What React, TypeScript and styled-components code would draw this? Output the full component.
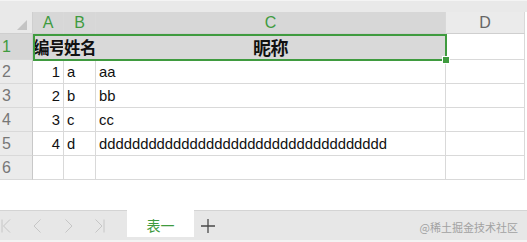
import React from "react";
import styled, { createGlobalStyle } from "styled-components";

const GREEN = "#3f9b3f";
const GRID = "#d9d9d9";

const GlobalStyle = createGlobalStyle`
  html, body {
    margin: 0;
    padding: 0;
    background: #ffffff;
  }
  * {
    box-sizing: border-box;
  }
`;

const Page = styled.div`
  width: 527px;
  height: 242px;
  display: flex;
  flex-direction: column;
  overflow: hidden;
  font-family: "Liberation Sans", "Noto Sans CJK SC", sans-serif;
`;

const TopStrip = styled.div`
  height: 12px;
  background: #e9e9e9;
  border-top: 1px solid #f4f4f4;
`;

const SheetWrap = styled.div`
  position: relative;
  width: 525px;
`;

const Sheet = styled.div`
  display: grid;
  grid-template-columns: 33px 31px 32px 350px 79px;
  grid-template-rows: 22px 26px repeat(5, 24px);
`;

const Corner = styled.div`
  position: relative;
  background: #e9e9e9;
  border-right: 1px solid #cfcfcf;
  border-bottom: 1px solid #cfcfcf;

  &::after {
    content: "";
    position: absolute;
    right: 5px;
    bottom: 3px;
    border-left: 10px solid transparent;
    border-bottom: 10px solid #c4c4c4;
  }
`;

const ColHead = styled.div<{ $selected?: boolean }>`
  display: flex;
  align-items: center;
  justify-content: center;
  background: ${(p) => (p.$selected ? "#d7d7d7" : "#ebebeb")};
  color: ${(p) => (p.$selected ? GREEN : "#666666")};
  border-right: 1px solid ${GRID};
  border-bottom: 1px solid #cfcfcf;
  font-family: "Liberation Sans", sans-serif;
  font-size: 16px;
  padding-top: 1px;
`;

const RowHead = styled.div<{ $selected?: boolean }>`
  display: flex;
  align-items: center;
  padding-left: 2px;
  background: ${(p) => (p.$selected ? "#d7d7d7" : "#ebebeb")};
  color: ${(p) => (p.$selected ? GREEN : "#777777")};
  border-right: 1px solid #c8c8c8;
  border-bottom: 1px solid ${GRID};
  font-size: 16px;
`;

const Cell = styled.div<{
  $align?: "left" | "right" | "center";
  $selected?: boolean;
  $head?: boolean;
  $size?: number;
}>`
  display: flex;
  align-items: center;
  justify-content: ${(p) =>
    p.$align === "right" ? "flex-end" : p.$align === "center" ? "center" : "flex-start"};
  padding: 0 ${(p) => (p.$head ? "0" : "3px")};
  background: ${(p) => (p.$selected ? "#d9d9d9" : "#ffffff")};
  border-right: 1px solid ${(p) => (p.$selected ? "#d9d9d9" : GRID)};
  border-bottom: 1px solid ${GRID};
  color: #111111;
  font-family: ${(p) =>
    p.$head
      ? `"Noto Sans CJK SC", sans-serif`
      : `"Liberation Sans", "Noto Sans CJK SC", sans-serif`};
  font-weight: ${(p) => (p.$head ? 700 : 400)};
  font-size: ${(p) => p.$size ?? 14.8}px;
  white-space: nowrap;
  overflow: ${(p) => (p.$head ? "hidden" : "visible")};
  letter-spacing: ${(p) => (p.$head ? "-0.5px" : "0")};
`;

const Selection = styled.div`
  position: absolute;
  left: 33px;
  top: 22px;
  width: 414px;
  height: 27px;
  border: 2px solid ${GREEN};
  pointer-events: none;
`;

const Handle = styled.div`
  position: absolute;
  right: -4px;
  bottom: -4px;
  width: 6px;
  height: 6px;
  background: ${GREEN};
  border: 1px solid #ffffff;
  box-sizing: content-box;
  margin: -1px;
`;

const Blank = styled.div`
  height: 30px;
  background: #ffffff;
`;

const TabBar = styled.div`
  height: 30px;
  display: flex;
  align-items: stretch;
  background: #e7e7e7;
  border-top: 1px solid #d4d4d4;
`;

const Nav = styled.div`
  width: 127px;
  display: flex;
  align-items: center;
  gap: 20px;
  padding-left: 1px;
`;

const NavIcon = styled.svg`
  width: 11px;
  height: 16px;
  stroke: #c6c6c6;
  stroke-width: 1;
  fill: none;
`;

const SheetTab = styled.div`
  width: 67px;
  display: flex;
  align-items: center;
  justify-content: center;
  background: #ffffff;
  margin-bottom: 3px;
  margin-top: -1px;
  color: ${GREEN};
  font-family: "Noto Sans CJK SC", sans-serif;
  font-size: 14px;
  padding-top: 2px;
`;

const AddTab = styled.div`
  width: 28px;
  display: flex;
  align-items: center;
  justify-content: center;
`;

const Spacer = styled.div`
  flex: 1;
`;

const Watermark = styled.div`
  display: flex;
  align-items: center;
  padding-right: 9px;
  padding-top: 3px;
  color: #a2a2a2;
  font-family: "Noto Sans CJK SC", sans-serif;
  font-size: 11px;
`;

const BottomStrip = styled.div`
  height: 2px;
  background: #f3f3f3;
`;

const rows = [
  { n: 2, id: "1", name: "a", nick: "aa" },
  { n: 3, id: "2", name: "b", nick: "bb" },
  { n: 4, id: "3", name: "c", nick: "cc" },
  { n: 5, id: "4", name: "d", nick: "d".repeat(35) },
];

const App = () => {
  return (
    <>
      <GlobalStyle />
      <Page>
        <TopStrip />
        <SheetWrap>
          <Sheet>
            <Corner />
            <ColHead $selected>A</ColHead>
            <ColHead $selected>B</ColHead>
            <ColHead $selected>C</ColHead>
            <ColHead>D</ColHead>

            <RowHead $selected>1</RowHead>
            <Cell $selected $head $size={16.5}>编号</Cell>
            <Cell $selected $head $size={16.5}>姓名</Cell>
            <Cell $selected $head $align="center" $size={18}>
              昵称
            </Cell>
            <Cell />

            {rows.map((r) => (
              <React.Fragment key={r.n}>
                <RowHead>{r.n}</RowHead>
                <Cell $align="right">{r.id}</Cell>
                <Cell>{r.name}</Cell>
                <Cell>{r.nick}</Cell>
                <Cell />
              </React.Fragment>
            ))}

            <RowHead>6</RowHead>
            <Cell />
            <Cell />
            <Cell />
            <Cell />
          </Sheet>
          <Selection>
            <Handle />
          </Selection>
        </SheetWrap>
        <Blank />
        <TabBar>
          <Nav>
            <NavIcon viewBox="0 0 11 16">
              <path d="M1 1.5 V14.5 M9 1.5 L2.5 8 L9 14.5" />
            </NavIcon>
            <NavIcon viewBox="0 0 11 16">
              <path d="M8.5 1.5 L2 8 L8.5 14.5" />
            </NavIcon>
            <NavIcon viewBox="0 0 11 16">
              <path d="M2.5 1.5 L9 8 L2.5 14.5" />
            </NavIcon>
            <NavIcon viewBox="0 0 11 16">
              <path d="M1.5 1.5 L8 8 L1.5 14.5 M10 1.5 V14.5" />
            </NavIcon>
          </Nav>
          <SheetTab>表一</SheetTab>
          <AddTab>
            <svg width="16" height="16" viewBox="0 0 16 16">
              <path d="M8 1 V15 M1 8 H15" stroke="#4a4a4a" strokeWidth="1.3" />
            </svg>
          </AddTab>
          <Spacer />
          <Watermark>@稀土掘金技术社区</Watermark>
        </TabBar>
        <BottomStrip />
      </Page>
    </>
  );
};

export default App;
